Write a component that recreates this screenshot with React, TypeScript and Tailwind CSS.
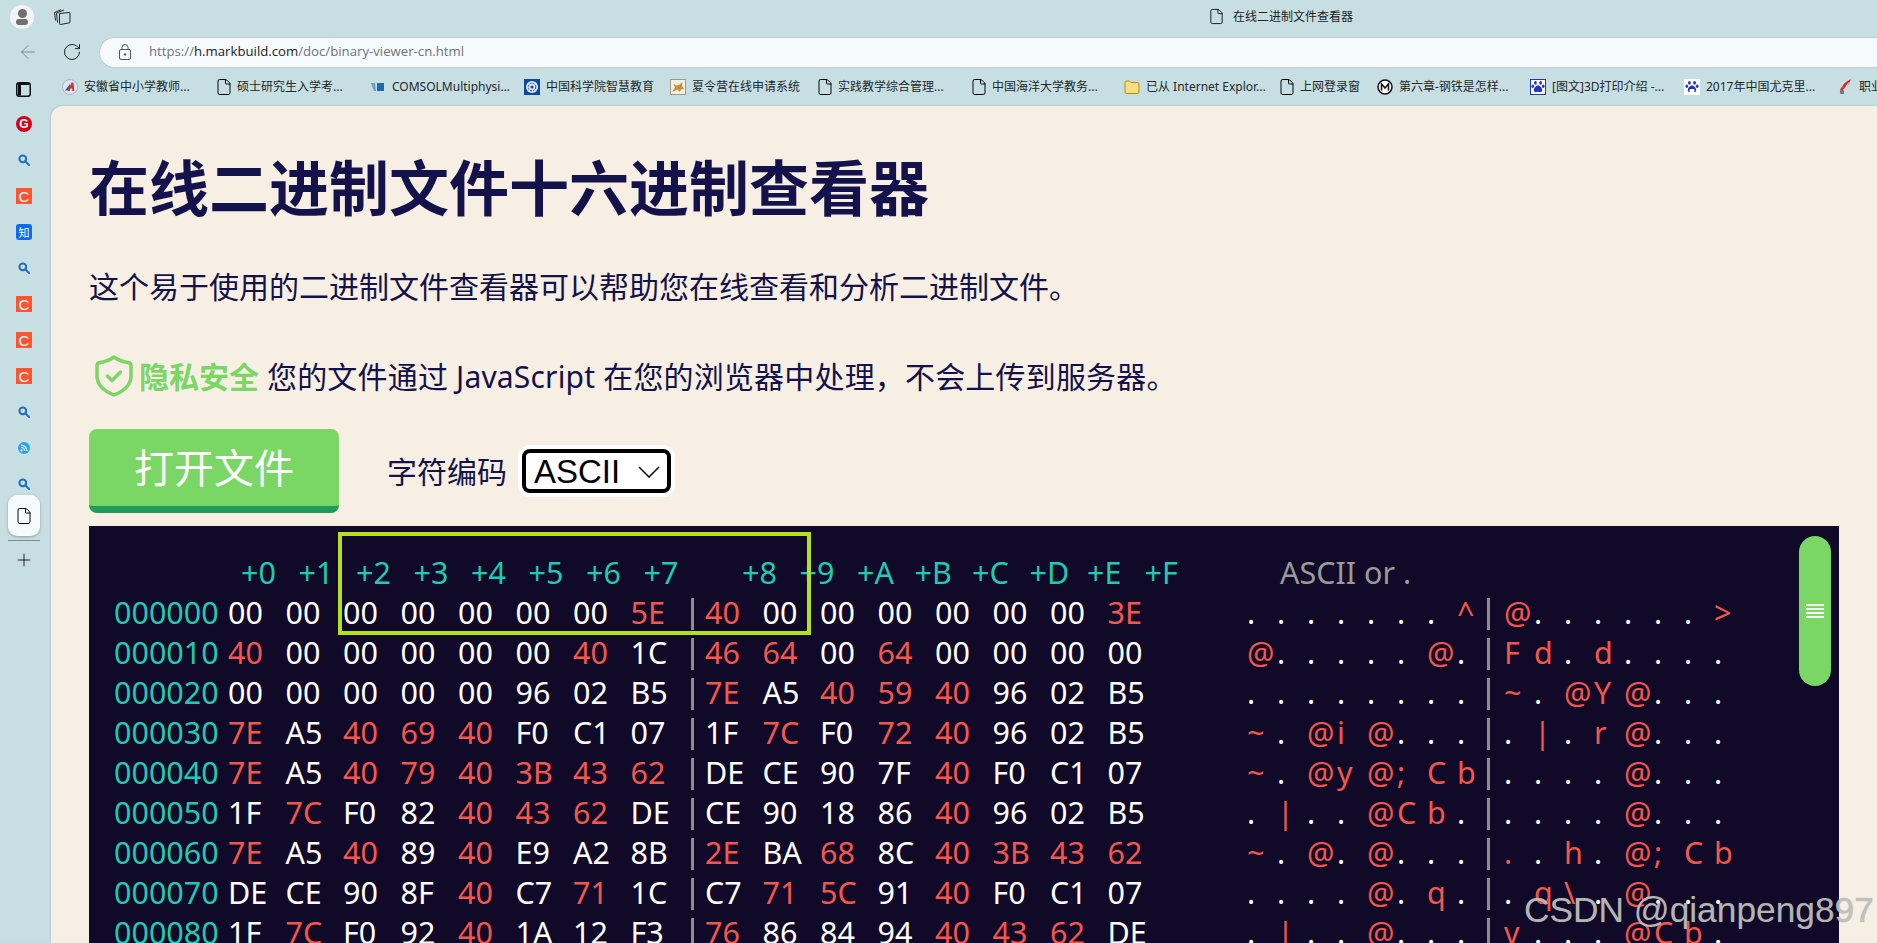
import { ArrowLeft, File, Plus, RotateCw } from "lucide-react";

const cjk = "font-['Noto_Sans','Noto_Sans_CJK_SC',sans-serif]";

const rows: [string, string][] = [
  ["000000", "00 00 00 00 00 00 00 5E 40 00 00 00 00 00 00 3E"],
  ["000010", "40 00 00 00 00 00 40 1C 46 64 00 64 00 00 00 00"],
  ["000020", "00 00 00 00 00 96 02 B5 7E A5 40 59 40 96 02 B5"],
  ["000030", "7E A5 40 69 40 F0 C1 07 1F 7C F0 72 40 96 02 B5"],
  ["000040", "7E A5 40 79 40 3B 43 62 DE CE 90 7F 40 F0 C1 07"],
  ["000050", "1F 7C F0 82 40 43 62 DE CE 90 18 86 40 96 02 B5"],
  ["000060", "7E A5 40 89 40 E9 A2 8B 2E BA 68 8C 40 3B 43 62"],
  ["000070", "DE CE 90 8F 40 C7 71 1C C7 71 5C 91 40 F0 C1 07"],
  ["000080", "1F 7C F0 92 40 1A 12 F3 76 86 84 94 40 43 62 DE"],
];

const isPrintable = (b: string) => {
  const n = parseInt(b, 16);
  return n > 32 && n < 127;
};

function DocIcon() {
  return <File size={18} strokeWidth={1.3} className="text-black shrink-0 -ml-[2px] -mr-[2px]" />;
}

function Search() {
  return (
    <svg width="12" height="12" viewBox="0 0 12 12" fill="none" stroke="#1f6fc0" strokeWidth="2">
      <circle cx="4.8" cy="4.8" r="3.4" />
      <path d="M7.4 7.4 11 11" strokeLinecap="round" />
    </svg>
  );
}

function CsdnIcon() {
  return (
    <div className="w-4 h-4 bg-[#fc5531] flex items-center justify-center text-white text-[15px] leading-none font-['Liberation_Sans',sans-serif]">
      C
    </div>
  );
}

function Paw({ boxed }: { boxed?: boolean }) {
  return (
    <svg width="16" height="16" viewBox="0 0 16 16" className="shrink-0">
      <rect x="0.5" y="0.5" width="15" height="15" fill="#fff" stroke={boxed ? "#2233cc" : "#fff"} />
      <g fill="#2233cc">
        <ellipse cx="5.4" cy="3.8" rx="1.4" ry="1.9" />
        <ellipse cx="10.6" cy="3.8" rx="1.4" ry="1.9" />
        <ellipse cx="2.8" cy="7.2" rx="1.300" ry="1.700" />
        <ellipse cx="13.2" cy="7.2" rx="1.300" ry="1.700" />
        <path d="M8 6.500c2 0 4.200 2.600 4.200 4.700 0 2-1.800 2-4.200 1.600-2.400.4-4.200.4-4.200-1.600C3.800 9.100 6 6.500 8 6.500z" />
      </g>
      {!boxed && <rect x="5.500" y="10" width="5" height="3" rx="1" fill="#fff" />}
    </svg>
  );
}

const bookmarks = [
  {
    w: "w-[155px]",
    label: "安徽省中小学教师...",
    icon: (
      <svg width="16" height="16" viewBox="0 0 16 16" className="shrink-0">
        <circle cx="8" cy="8" r="7.500" fill="#dfe6f2" stroke="#a8b2d0" />
        <path d="M3 11.500 8 5v6.500z" fill="#2a5ca8" />
        <path d="M5.500 12 9.500 3.500h2l.8 8.500h-2l-.2-2.500H8.500L7.500 12z" fill="#d8322c" />
      </svg>
    ),
  },
  { w: "w-[153px]", label: "硕士研究生入学考...", icon: <DocIcon /> },
  {
    w: "w-[154px]",
    label: "COMSOLMultiphysi...",
    icon: (
      <svg width="16" height="16" viewBox="0 0 16 16" className="shrink-0">
        <path d="M1 4h4l1 8H4z" fill="#6a9cc8" />
        <path d="M7 4h7v8H7z" fill="#1f6aa8" />
      </svg>
    ),
  },
  {
    w: "w-[146px]",
    label: "中国科学院智慧教育",
    icon: (
      <svg width="16" height="16" viewBox="0 0 16 16" className="shrink-0">
        <rect width="16" height="16" fill="#0b4a9c" />
        <circle cx="8" cy="8" r="6" fill="#dfe8f4" />
        <circle cx="8" cy="8" r="3.800" fill="none" stroke="#0b4a9c" strokeWidth="1" strokeDasharray="2 1" />
        <circle cx="8" cy="8" r="1.600" fill="#0b4a9c" />
      </svg>
    ),
  },
  {
    w: "w-[148px]",
    label: "夏令营在线申请系统",
    icon: (
      <svg width="16" height="16" viewBox="0 0 16 16" className="shrink-0">
        <rect x="0.500" y="0.500" width="15" height="15" fill="#f5f0e2" stroke="#9a9a90" />
        <path d="M2 13l3-4.500L3.500 5l3 1.500L9 6l3.500-3-.5 4 2 3-3 .5-1.500 2.500-2-2.500z" fill="#c98f3a" />
      </svg>
    ),
  },
  { w: "w-[154px]", label: "实践教学综合管理...", icon: <DocIcon /> },
  { w: "w-[152px]", label: "中国海洋大学教务...", icon: <DocIcon /> },
  {
    w: "w-[156px]",
    label: "已从 Internet Explor...",
    icon: (
      <svg width="16" height="16" viewBox="0 0 16 16" className="shrink-0">
        <path d="M1 3.500A1.500 1.500 0 0 1 2.500 2h3L7 3.500h6.500A1.500 1.500 0 0 1 15 5v8a1.500 1.500 0 0 1-1.500 1.500h-11A1.500 1.500 0 0 1 1 13z" fill="#f7dc80" stroke="#b98a10" />
      </svg>
    ),
  },
  { w: "w-[97px]", label: "上网登录窗", icon: <DocIcon /> },
  {
    w: "w-[153px]",
    label: "第六章-钢铁是怎样...",
    icon: (
      <svg width="16" height="16" viewBox="0 0 16 16" className="shrink-0">
        <circle cx="8" cy="8" r="7" fill="#fff" stroke="#111" strokeWidth="1.500" />
        <path d="M4.500 11.500V4.800L8 9l3.500-4.200v6.700" fill="none" stroke="#111" strokeWidth="1.500" />
      </svg>
    ),
  },
  { w: "w-[154px]", label: "[图文]3D打印介绍 -...", icon: <Paw boxed /> },
  { w: "w-[153px]", label: "2017年中国尤克里...", icon: <Paw /> },
  {
    w: "w-[60px]",
    label: "职业",
    icon: (
      <svg width="16" height="16" viewBox="0 0 16 16" className="shrink-0">
        <path d="M14 0C10 2 7 4 5 8l3 1c1-3 3-5 4.500-6.500L11 6c1 0 1.500-3 3-6z" fill="#d62a2a" />
        <path d="M8 9 5 8c-2 1-2 3-1 5l2 2 1-1c-2-2-1-4 1-5z" fill="#d62a2a" />
        <circle cx="5" cy="13" r="2.200" fill="#777" />
      </svg>
    ),
  },
];

function ChromeBar() {
  return (
    <div className={`shrink-0 ${cjk}`}>
      {/* tab strip */}
      <div className="h-[37px] flex items-center">
        <div className="ml-[10px] w-6 h-6 -mt-[4px] rounded-full bg-[#f2f4f5] flex flex-col items-center justify-center">
          <div className="w-[9px] h-[9px] rounded-full bg-[#6f6f6f]" />
          <div className="w-[12px] h-[6px] rounded-full mt-[1px] bg-[#6f6f6f]" />
        </div>
        <svg width="18" height="16" viewBox="0 0 18 16" fill="none" stroke="#222" strokeWidth="1" className="ml-[19px] -mt-[4px]">
          <path d="M6.500 4.500 16 3.500a1 1 0 0 1 1 1V13a1 1 0 0 1-1 .9l-8.500 1.600a1 1 0 0 1-1-1z" />
          <path d="M4.500 13.500 3.500 4 11 1M2.500 11.500 1.500 3.500 8 .7" />
        </svg>
        <div className="ml-[1137px] -mt-[4px] flex items-center gap-[8px]">
          <File size={17} strokeWidth={1.2} className="text-black" />
          <span className="text-[12px] text-[#222]">在线二进制文件查看器</span>
        </div>
      </div>
      {/* toolbar */}
      <div className="h-[30px] flex items-center">
        <ArrowLeft size={22} strokeWidth={1} className="ml-[17px] text-[#75838a]" />
        <RotateCw size={20} strokeWidth={1.2} className="ml-[23px] text-[#222]" />
        <div className="ml-[17px] flex-1 h-[31px] rounded-l-full bg-[#f6fafc] border-y border-l border-[#c3cdd0] flex items-center">
          <svg width="12" height="16" viewBox="0 0 12 16" fill="none" stroke="#555" strokeWidth="1" className="ml-[19px]">
            <rect x="0.500" y="5.500" width="11" height="10" rx="1.500" />
            <path d="M3 5.500V3.500a3 3 0 0 1 6 0v2" />
            <circle cx="6" cy="10.500" r="0.800" fill="#555" />
          </svg>
          <span className="ml-[18px] text-[13.200px] text-[#6e7478] font-['Open_Sans',sans-serif]">
            https://<span className="text-[#1c2226]">h.markbuild.com</span>/doc/binary-viewer-cn.html
          </span>
        </div>
      </div>
      {/* bookmarks */}
      <div className="h-[39px] flex items-center pl-4 overflow-hidden whitespace-nowrap">
        <svg width="15" height="15" viewBox="0 0 15 15" fill="none" className="shrink-0 mt-[6px]">
          <rect x="0.750" y="0.750" width="13.500" height="13.500" rx="2.500" stroke="#111" strokeWidth="1.500" />
          <path d="M2 1h11v2H5v10.500H2z" fill="#111" />
        </svg>
        <div className="ml-[31px] flex items-center">
          {bookmarks.map((b) => (
            <div key={b.label} className={`${b.w} shrink-0 flex items-center gap-[6px] text-[12px] text-[#20282c]`}>
              {b.icon}
              <span>{b.label}</span>
            </div>
          ))}
        </div>
      </div>
    </div>
  );
}

function Sidebar() {
  const slot = "h-9 flex items-center justify-center";
  return (
    <div className="w-[51px] shrink-0 flex flex-col items-center pr-[3px]">
      <div className={slot}>
        <div className="w-4 h-4 rounded-full bg-[#d4001a] flex items-center justify-center text-white text-[12px] font-bold leading-none font-['Liberation_Sans',sans-serif]">
          G
        </div>
      </div>
      <div className={slot}><Search /></div>
      <div className={slot}><CsdnIcon /></div>
      <div className={slot}>
        <div className="w-4 h-4 rounded-[3px] bg-[#0a6cf0] flex items-center justify-center text-white text-[11px] leading-none font-['Noto_Sans_CJK_SC',sans-serif]">
          知
        </div>
      </div>
      <div className={slot}><Search /></div>
      <div className={slot}><CsdnIcon /></div>
      <div className={slot}><CsdnIcon /></div>
      <div className={slot}><CsdnIcon /></div>
      <div className={slot}><Search /></div>
      <div className={slot}>
        <svg width="16" height="16" viewBox="0 0 16 16">
          <circle cx="8" cy="8" r="7.500" fill="#cfe0ea" />
          <circle cx="8" cy="8" r="6" fill="#22a5ee" />
          <circle cx="5.600" cy="10.400" r="1.100" fill="#fff" />
          <path d="M5 7.200a3.800 3.800 0 0 1 3.800 3.800M5 5a6 6 0 0 1 6 6" fill="none" stroke="#fff" strokeWidth="1.100" />
        </svg>
      </div>
      <div className={slot}><Search /></div>
      <div className="-mt-[7px] w-8 h-[41px] rounded-[9px] bg-[#f6fafc] shadow-[0_1px_3px_rgba(0,0,0,0.3)] flex items-center justify-center">
        <File size={18} strokeWidth={1.3} className="text-black" />
      </div>
      <div className="mt-1 w-8 h-px bg-[#7d8a8f]" />
      <Plus size={20} strokeWidth={1} className="mt-[9px] text-black" />
    </div>
  );
}

function HexPanel() {
  const sep = "w-[3px] h-8 bg-[#8d8d8d]";
  return (
    <div className="relative mt-[13px] mr-[38px] flex-1 bg-[#100a28] pl-[25px] pt-[26px] overflow-hidden text-[30.500px] leading-7 whitespace-nowrap">
      {/* header */}
      <div className="flex h-[46px] pt-[6px] text-[#1fcbb2]">
        <div className="w-[114px] shrink-0" />
        {["+0", "+1", "+2", "+3", "+4", "+5", "+6", "+7"].map((h) => (
          <div key={h} className="w-[57.500px] shrink-0 pl-[13px]">{h}</div>
        ))}
        <div className="w-[41px] shrink-0" />
        {["+8", "+9", "+A", "+B", "+C", "+D", "+E", "+F"].map((h) => (
          <div key={h} className="w-[57.500px] shrink-0 pl-[13px]">{h}</div>
        ))}
        <div className="ml-[91px] text-[#9a9a9a]">ASCII or .</div>
      </div>
      {rows.map(([addr, hex]) => {
        const bytes = hex.split(" ");
        const hexCell = (b: string, i: number) => (
          <div key={i} className={`w-[57.500px] shrink-0 ${isPrintable(b) ? "text-[#f4564e]" : "text-white"}`}>{b}</div>
        );
        const charCell = (b: string, i: number) =>
          isPrintable(b) ? (
            <div key={i} className="w-[30px] shrink-0 text-[#f4564e]">{String.fromCharCode(parseInt(b, 16))}</div>
          ) : (
            <div key={i} className="w-[30px] shrink-0 text-white">.</div>
          );
        return (
          <div key={addr} className="flex h-8 mb-2">
            <div className="w-[114px] shrink-0 text-[#1fcbb2]">{addr}</div>
            {bytes.slice(0, 8).map(hexCell)}
            <div className={`ml-[3px] mr-[11px] ${sep}`} />
            {bytes.slice(8).map(hexCell)}
            <div className="w-[82px] shrink-0" />
            {bytes.slice(0, 8).map(charCell)}
            <div className={`mr-[14px] ${sep}`} />
            {bytes.slice(8).map(charCell)}
          </div>
        );
      })}
      {/* annotation box */}
      <div className="absolute left-[249px] top-[6px] w-[473px] h-[103px] border-4 border-[#b5e01b]" />
      {/* scrollbar */}
      <div className="absolute right-2 top-[10px] w-8 h-[150px] rounded-full bg-[#7ad765] flex flex-col items-center justify-center gap-[2px]">
        <div className="w-[18px] h-[2px] bg-white/90" />
        <div className="w-[18px] h-[2px] bg-white/90" />
        <div className="w-[18px] h-[2px] bg-white/90" />
        <div className="w-[18px] h-[2px] bg-white/90" />
      </div>
    </div>
  );
}

export default function App() {
  return (
    <div className={`relative h-screen w-full overflow-hidden flex flex-col bg-[#c7dfe3] ${cjk}`}>
      <ChromeBar />
      <div className="flex-1 flex min-h-0">
        <Sidebar />
        <main className="flex-1 min-w-0 flex flex-col rounded-tl-xl bg-[#f7efe3] pl-[38px] pt-[48px] text-[#13124a] shadow-[-1px_-1px_1px_rgba(0,0,0,0.08)]">
          <h1 className="text-[60px] leading-[68px] font-bold">在线二进制文件十六进制查看器</h1>
          <p className="mt-[44px] text-[30px] leading-[42px]">这个易于使用的二进制文件查看器可以帮助您在线查看和分析二进制文件。</p>
          <div className="mt-[47px] flex items-center h-[42px] text-[30px]">
            <svg width="38" height="42" viewBox="0 0 38 42" fill="none" stroke="#7ad765" strokeWidth="3.500" className="ml-[6px] shrink-0">
              <path d="M19 2c4 3 9 4.800 14 5.500 1.500.2 3 1.200 3 3V21c0 9-7 15-17 19C9 36 2 30 2 21V10.500c0-1.800 1.500-2.800 3-3C10 6.800 15 5 19 2z" strokeLinejoin="round" />
              <path d="M12.500 21l4.500 4.500 8.500-8.500" strokeLinecap="round" strokeLinejoin="round" />
            </svg>
            <span className="ml-[6px] font-bold text-[#7ad765]">隐私安全</span>
            <span className="ml-[8px] tracking-[0.18px]">您的文件通过 JavaScript 在您的浏览器中处理，不会上传到服务器。</span>
          </div>
          <div className="mt-[32px] flex items-center">
            <button className="w-[250px] h-[84px] rounded-lg bg-[#7ad765] border-b-[7px] border-[#209c5a] text-white text-[40px]">打开文件</button>
            <label className="ml-[48px] text-[30px]">字符编码</label>
            <div className="relative ml-[15px]">
              <select className="appearance-none block w-[149px] h-[44px] rounded-lg border-4 border-black bg-white ring-4 ring-white pl-[8px] text-[33px] leading-none text-black font-['Liberation_Sans',sans-serif]">
                <option>ASCII</option>
              </select>
              <svg width="22" height="12" viewBox="0 0 22 12" fill="none" stroke="#111" strokeWidth="1.600" className="absolute right-[11px] top-[17px]">
                <path d="M1 1l10 10L21 1" />
              </svg>
            </div>
          </div>
          <HexPanel />
        </main>
      </div>
      {/* watermark */}
      <div className="absolute left-[1524px] top-[888px] text-[35.300px] leading-[44px] whitespace-nowrap text-[#c6c6c6]/90 [text-shadow:0_0_1px_rgba(90,90,90,0.6)] font-['Liberation_Sans',sans-serif]">
        CSDN @qianpeng897
      </div>
    </div>
  );
}
